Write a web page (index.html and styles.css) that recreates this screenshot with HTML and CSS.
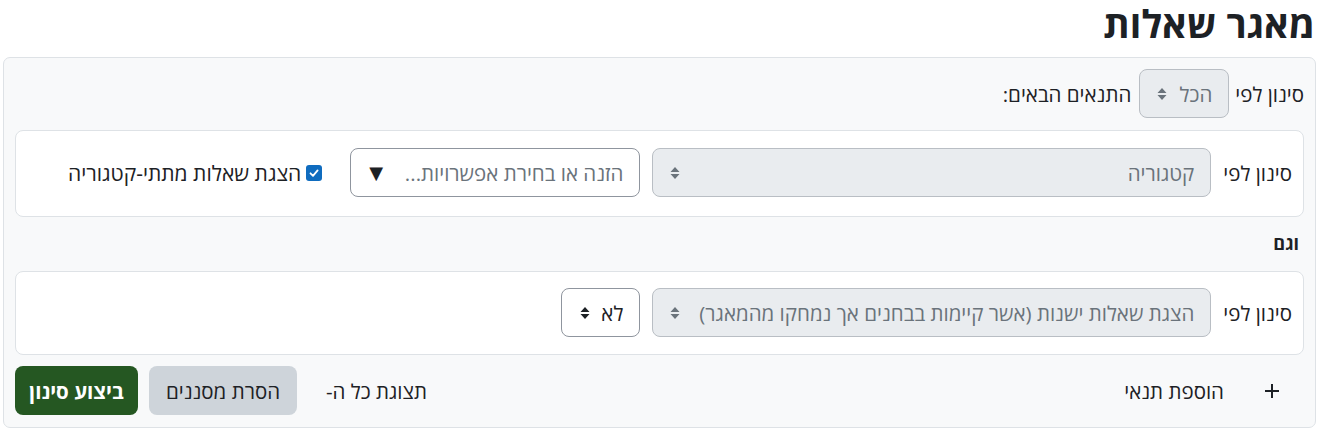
FILE: index.html
```html
<!DOCTYPE html>
<html lang="he" dir="rtl">
<head>
<meta charset="utf-8">
<title>מאגר שאלות</title>
<link rel="stylesheet" href="styles.css">
</head>
<body>
<div class="page">
  <h2 class="title">מאגר שאלות</h2>
  <div class="filters">
    <div class="jointype">
      <span class="lbl">סינון לפי</span>
      <div class="select disabled sel-all"><span>הכל</span><svg class="updown" width="10" height="14" viewBox="0 0 10 14"><path d="M5 1 L9.5 6 H0.5 Z M5 13 L9.5 8 H0.5 Z" fill="currentColor"/></svg></div>
      <span class="lbl">התנאים הבאים:</span>
    </div>

    <div class="card">
      <span class="lbl">סינון לפי</span>
      <div class="select disabled wide"><span>קטגוריה</span><svg class="updown" width="10" height="14" viewBox="0 0 10 14"><path d="M5 1 L9.5 6 H0.5 Z M5 13 L9.5 8 H0.5 Z" fill="currentColor"/></svg></div>
      <div class="auto"><span class="ph">הזנה או בחירת אפשרויות...</span><span class="tri">▼</span></div>
      <label class="check"><span class="box"><svg width="12" height="12" viewBox="0 0 12 12"><path d="M2.5 6.3 L5 8.8 L9.6 3.4" fill="none" stroke="#fff" stroke-width="1.8" stroke-linecap="round" stroke-linejoin="round"/></svg></span><span>הצגת שאלות מתתי-קטגוריה</span></label>
    </div>

    <div class="and">וגם</div>

    <div class="card card2">
      <span class="lbl">סינון לפי</span>
      <div class="select disabled wide"><span>הצגת שאלות ישנות (אשר קיימות בבחנים אך נמחקו מהמאגר)</span><svg class="updown" width="10" height="14" viewBox="0 0 10 14"><path d="M5 1 L9.5 6 H0.5 Z M5 13 L9.5 8 H0.5 Z" fill="currentColor"/></svg></div>
      <div class="select sel-no"><span>לא</span><svg class="updown" width="10" height="14" viewBox="0 0 10 14"><path d="M5 1 L9.5 6 H0.5 Z M5 13 L9.5 8 H0.5 Z" fill="currentColor"/></svg></div>
    </div>

    <div class="actions">
      <button class="addcond"><svg width="16" height="16" viewBox="0 0 16 16"><path d="M8 1 V15 M1 8 H15" stroke="#1d2125" stroke-width="2"/></svg><span>הוספת תנאי</span></button>
      <div class="spacer"></div>
      <span class="showall">תצוגת כל ה-</span>
      <button class="btn btn-secondary">הסרת מסננים</button>
      <button class="btn btn-primary">ביצוע סינון</button>
    </div>
  </div>
</div>
</body>
</html>
```

FILE: styles.css
```css
* { box-sizing: border-box; }
html, body { margin: 0; padding: 0; background: #fff; }
body {
  font-family: "Open Sans", "DejaVu Sans", sans-serif;
  font-size: 20.5px;
  color: #1d2125;
}
.page {
  padding: 0 19px 0 3px;
}
.title {
  margin: 0;
  height: 57px;
  padding-top: 0;
  padding-right: 1px;
  font-size: 38px;
  font-weight: 700;
  line-height: 46px;
}
.filters {
  background: #f8f9fa;
  border: 1px solid #dee2e6;
  border-radius: 7px;
  padding: 11px;
  height: 371px;
}
.jointype {
  display: flex;
  align-items: center;
  height: 49px;
}
.jointype .lbl:first-child { margin-left: 6px; }
.jointype .sel-all { margin-left: 8px; }
.select {
  height: 49px;
  border: 1px solid #8f959e;
  border-radius: 8px;
  background: #fff;
  display: flex;
  align-items: center;
  justify-content: space-between;
  padding: 0 16px 0 17px;
  color: #1d2125;
  white-space: nowrap;
}
.select.disabled {
  background: #e9ecef;
  border-color: #b9bec4;
  color: #6a737b;
}
.updown { color: #6a737b; flex: none; }
.select:not(.disabled) .updown { color: #1d2125; }
.sel-all { width: 90px; }
.wide { width: 559px; }
.sel-no { width: 79px; padding: 0 16px 0 18px; }
.card {
  margin-top: 12px;
  background: #fff;
  border: 1px solid #dee2e6;
  border-radius: 8px;
  display: flex;
  align-items: center;
  padding: 17px 11px 19px 11px;
  height: 87px;
}
.card .lbl { margin-left: 12px; }
.card2 { margin-top: 0; height: 84px; padding: 16px 11px 17px 11px; }
.auto {
  margin-right: 12px;
  width: 290px;
  height: 49px;
  border: 1px solid #8f959e;
  border-radius: 8px;
  background: #fff;
  display: flex;
  align-items: center;
  justify-content: space-between;
  padding: 0 16px 0 18px;
  white-space: nowrap;
}
.auto .ph { color: #6a737b; }
.auto .tri { font-size: 18px; color: #1d2125; font-family: "DejaVu Sans", sans-serif; }
.sel-no { margin-right: 12px; }
.check {
  margin-right: 28px;
  display: flex;
  align-items: center;
  white-space: nowrap;
  font-size: 21px;
}
.box {
  width: 16px;
  height: 16px;
  border-radius: 3px;
  background: #0f6cbf;
  display: flex;
  align-items: center;
  justify-content: center;
  margin-left: 5px;
}
.and {
  font-weight: 700;
  height: 54px;
  padding-top: 14px;
  padding-right: 5px;
  line-height: 24px;
  font-size: 18px;
}
.actions {
  display: flex;
  align-items: center;
  margin-top: 11px;
  height: 49px;
}
.addcond {
  font: inherit;
  color: #1d2125;
  background: none;
  border: 0;
  display: flex;
  align-items: center;
  gap: 40px;
  padding: 0 24px 0 0;
}
.spacer { flex: 1; }
.showall { margin-left: 29px; }
.btn {
  font: inherit;
  height: 49px;
  border: 0;
  border-radius: 8px;
  padding: 0;
  white-space: nowrap;
}
.btn-secondary { background: #ced4da; color: #1d2125; width: 148px; margin-left: 11px; }
.btn-primary { background: #255722; color: #fff; font-weight: 700; width: 123px; }
```
